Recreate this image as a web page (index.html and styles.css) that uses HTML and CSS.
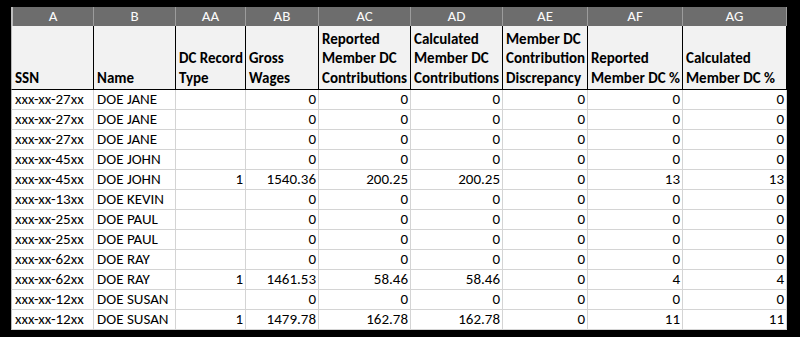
FILE: index.html
```html
<!DOCTYPE html>
<html>
<head>
<meta charset="utf-8">
<link rel="stylesheet" href="styles.css">
</head>
<body>
<div class="sheet">
  <div class="c h first">A</div>
  <div class="c h">B</div>
  <div class="c h">AA</div>
  <div class="c h">AB</div>
  <div class="c h">AC</div>
  <div class="c h">AD</div>
  <div class="c h">AE</div>
  <div class="c h">AF</div>
  <div class="c h">AG</div>

  <div class="c t first">SSN</div>
  <div class="c t">Name</div>
  <div class="c t">DC Record<br>Type</div>
  <div class="c t">Gross<br>Wages</div>
  <div class="c t">Reported<br>Member DC<br>Contributions</div>
  <div class="c t">Calculated<br>Member DC<br>Contributions</div>
  <div class="c t">Member DC<br>Contribution<br>Discrepancy</div>
  <div class="c t">Reported<br>Member DC %</div>
  <div class="c t">Calculated<br>Member DC %</div>

  <div class="c d first">xxx-xx-27xx</div><div class="c d">DOE JANE</div><div class="c d n"></div><div class="c d n">0</div><div class="c d n">0</div><div class="c d n">0</div><div class="c d n">0</div><div class="c d n">0</div><div class="c d n">0</div>
  <div class="c d first">xxx-xx-27xx</div><div class="c d">DOE JANE</div><div class="c d n"></div><div class="c d n">0</div><div class="c d n">0</div><div class="c d n">0</div><div class="c d n">0</div><div class="c d n">0</div><div class="c d n">0</div>
  <div class="c d first">xxx-xx-27xx</div><div class="c d">DOE JANE</div><div class="c d n"></div><div class="c d n">0</div><div class="c d n">0</div><div class="c d n">0</div><div class="c d n">0</div><div class="c d n">0</div><div class="c d n">0</div>
  <div class="c d first">xxx-xx-45xx</div><div class="c d">DOE JOHN</div><div class="c d n"></div><div class="c d n">0</div><div class="c d n">0</div><div class="c d n">0</div><div class="c d n">0</div><div class="c d n">0</div><div class="c d n">0</div>
  <div class="c d first">xxx-xx-45xx</div><div class="c d">DOE JOHN</div><div class="c d n">1</div><div class="c d n">1540.36</div><div class="c d n">200.25</div><div class="c d n">200.25</div><div class="c d n">0</div><div class="c d n">13</div><div class="c d n">13</div>
  <div class="c d first">xxx-xx-13xx</div><div class="c d">DOE KEVIN</div><div class="c d n"></div><div class="c d n">0</div><div class="c d n">0</div><div class="c d n">0</div><div class="c d n">0</div><div class="c d n">0</div><div class="c d n">0</div>
  <div class="c d first">xxx-xx-25xx</div><div class="c d">DOE PAUL</div><div class="c d n"></div><div class="c d n">0</div><div class="c d n">0</div><div class="c d n">0</div><div class="c d n">0</div><div class="c d n">0</div><div class="c d n">0</div>
  <div class="c d first">xxx-xx-25xx</div><div class="c d">DOE PAUL</div><div class="c d n"></div><div class="c d n">0</div><div class="c d n">0</div><div class="c d n">0</div><div class="c d n">0</div><div class="c d n">0</div><div class="c d n">0</div>
  <div class="c d first">xxx-xx-62xx</div><div class="c d">DOE RAY</div><div class="c d n"></div><div class="c d n">0</div><div class="c d n">0</div><div class="c d n">0</div><div class="c d n">0</div><div class="c d n">0</div><div class="c d n">0</div>
  <div class="c d first">xxx-xx-62xx</div><div class="c d">DOE RAY</div><div class="c d n">1</div><div class="c d n">1461.53</div><div class="c d n">58.46</div><div class="c d n">58.46</div><div class="c d n">0</div><div class="c d n">4</div><div class="c d n">4</div>
  <div class="c d first">xxx-xx-12xx</div><div class="c d">DOE SUSAN</div><div class="c d n"></div><div class="c d n">0</div><div class="c d n">0</div><div class="c d n">0</div><div class="c d n">0</div><div class="c d n">0</div><div class="c d n">0</div>
  <div class="c d first">xxx-xx-12xx</div><div class="c d">DOE SUSAN</div><div class="c d n">1</div><div class="c d n">1479.78</div><div class="c d n">162.78</div><div class="c d n">162.78</div><div class="c d n">0</div><div class="c d n">11</div><div class="c d n">11</div>
</div>
</body>
</html>
```
FILE: styles.css
```css
html, body {
  margin: 0;
  padding: 0;
  background: #000;
  width: 800px;
  height: 337px;
  overflow: hidden;
}
body {
  padding: 7px 0 0 11px;
  box-sizing: border-box;
}
.sheet {
  display: grid;
  grid-template-columns: 83px 82px 70px 73px 92px 92px 85px 95px 104px;
  grid-template-rows: 19px 64px repeat(12, 20px);
  width: 776px;
  background: #fff;
  font-family: "Carlito", "Lato", "Liberation Sans", sans-serif;
  font-size: 15px;
  color: #000;
}
.c {
  box-sizing: border-box;
  white-space: nowrap;
  overflow: hidden;
}
.h {
  background: #6d6d6d;
  color: #fafafa;
  text-align: center;
  font-size: 15px;
  line-height: 19px;
  border-right: 1px solid #9c9c9c;
}
.t {
  background: #f2f2f2;
  font-weight: bold;
  display: flex;
  flex-direction: column;
  justify-content: flex-end;
  line-height: 19.5px;
  padding: 0 0 1px 3px;
  border-right: 1px solid #000;
  border-bottom: 1px solid #000;
}
.d {
  line-height: 19px;
  padding: 0 3px;
  border-right: 1px solid #d4d4d4;
  border-bottom: 1px solid #d4d4d4;
}
.n {
  text-align: right;
  padding-right: 2px;
}
.first {
  border-left: 1px solid #b8b8b8;
}
.h.first {
  border-left: 2px solid #bdbdbd;
}
```
